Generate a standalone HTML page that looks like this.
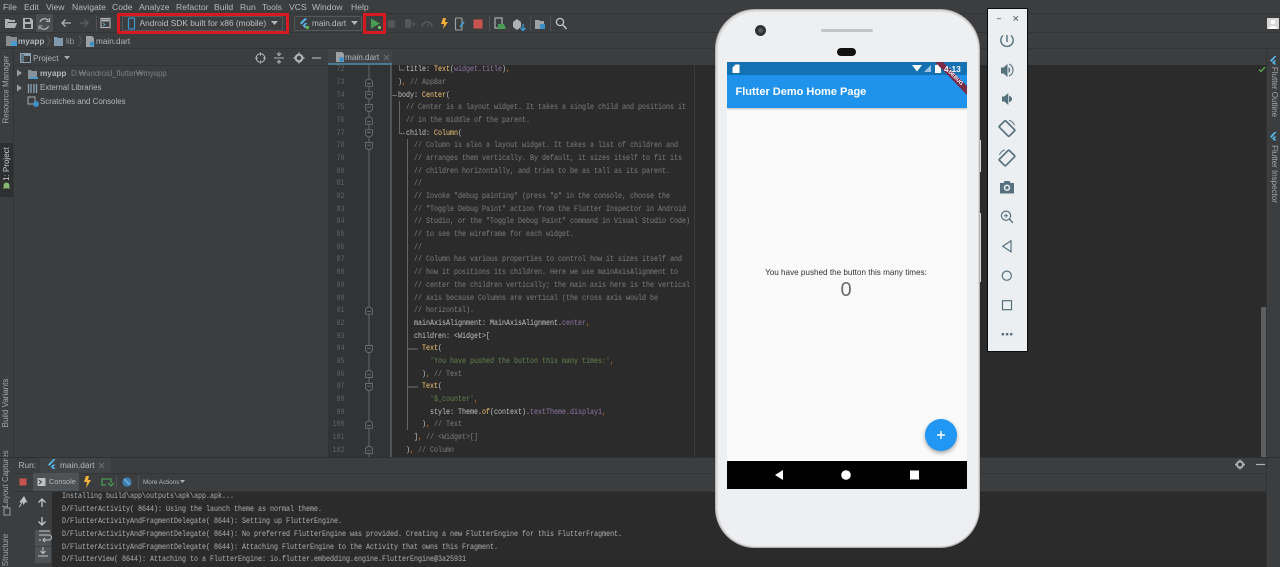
<!DOCTYPE html>
<html><head><meta charset="utf-8"><style>
*{box-sizing:border-box}
html,body{margin:0;padding:0;width:1280px;height:567px;overflow:hidden;background:#3b3d3f}
body{position:relative;font-family:"Liberation Sans","Noto Sans CJK KR",sans-serif;font-size:8.2px;color:#b4b7b9}
#w{position:absolute;left:0;top:0;width:1280px;height:567px;overflow:hidden;background:#3b3d3f;filter:blur(.3px)}
.a{position:absolute;white-space:nowrap}
.m{position:absolute;top:1.500px;line-height:11px;font-size:8.600px;color:#b6b8ba}
pre{margin:0;position:absolute;font-family:"Liberation Mono",monospace;font-size:8px;line-height:12.667px;transform:scaleX(.8333);transform-origin:0 0}
.c{color:#7e7e7e}.k{color:#c0c3c5}.y{color:#f5c679}.p{color:#8f75a6}.g{color:#64824f}.o{color:#c07a35}
.v{position:absolute;transform:rotate(-90deg);transform-origin:center;white-space:nowrap;font-size:8px;color:#a5a8aa;text-align:center;line-height:12px}
.v2{position:absolute;transform:rotate(90deg);transform-origin:center;white-space:nowrap;font-size:8px;color:#a5a8aa;text-align:center;line-height:12px}
svg{position:absolute;overflow:visible}
</style></head><body><div id="w">

<div class="a" style="left:0;top:13px;width:1280px;height:1px;background:#323435"></div>
<div class="a" style="left:0;top:32px;width:1280px;height:1px;background:#323435"></div>
<div class="a" style="left:0;top:48px;width:1280px;height:1px;background:#323435"></div>
<div class="a" style="left:13px;top:65px;width:315px;height:1px;background:#323435"></div>

<span class="m" style="left:3px">File</span><span class="m" style="left:24px">Edit</span><span class="m" style="left:46px">View</span><span class="m" style="left:72px">Navigate</span><span class="m" style="left:112px">Code</span><span class="m" style="left:139px">Analyze</span><span class="m" style="left:176px">Refactor</span><span class="m" style="left:214px">Build</span><span class="m" style="left:240px">Run</span><span class="m" style="left:262px">Tools</span><span class="m" style="left:289px">VCS</span><span class="m" style="left:312px">Window</span><span class="m" style="left:351px">Help</span>

<svg style="left:0;top:13px" width="120" height="20">
<path d="M5 6h4l1 1h5v2H8l-2 6H5z M8 10h9l-2 5H6z" fill="#afb1b3"/>
<path d="M23 5h8l2 2v9H23z" fill="#afb1b3"/><rect x="25" y="6" width="5" height="3" fill="#3b3d3f"/><rect x="25" y="11" width="6" height="4" fill="#3b3d3f"/>
<rect x="36" y="1" width="17" height="18" fill="#4b4e50"/>
<path d="M40 9a5 5 0 0 1 8.500-1.500M48.500 13a5 5 0 0 1-8.500 1.500" fill="none" stroke="#afb1b3" stroke-width="1.300"/><path d="M49.500 5v3.500H46M39 16.500V13h3.500" fill="none" stroke="#afb1b3" stroke-width="1.100"/>
<path d="M71 10H62M65.500 6.500 62 10l3.500 3.500" fill="none" stroke="#afb1b3" stroke-width="1.300"/>
<path d="M80 10h8M84.500 6.500 88 10l-3.500 3.500" fill="none" stroke="#5d6061" stroke-width="1.300"/>
<line x1="96.500" y1="3" x2="96.500" y2="18" stroke="#505355"/>
<rect x="101" y="5.500" width="9" height="9" fill="none" stroke="#afb1b3" stroke-width="1.200"/><rect x="102" y="6.500" width="7" height="2" fill="#afb1b3"/><path d="M103 10l2 1.500-2 1.500" fill="none" stroke="#5fa2c4"/>
</svg>

<div class="a" style="left:117px;top:13px;width:172px;height:21px;border:3px solid #d71a21"></div>
<div class="a" style="left:122px;top:16px;width:161px;height:15px;border:1px solid #55585a;border-radius:2px"></div>
<svg style="left:127px;top:17px" width="10" height="13"><rect x="1.500" y="1" width="6" height="11" rx="1" fill="none" stroke="#3f97cf" stroke-width="1.200"/></svg>
<div class="a" style="left:139.500px;top:18px;line-height:11px;font-size:8.400px;color:#bcbfc1">Android SDK built for x86 (mobile)</div>
<svg style="left:271px;top:21px" width="9" height="5"><path d="M0 0h7L3.500 4z" fill="#b4b7b9"/></svg>
<div class="a" style="left:294px;top:16px;width:68px;height:15px;border:1px solid #55585a;border-radius:2px"></div>
<svg style="left:299px;top:17px" width="12" height="13"><path d="M6 1 1 6l1.500 1.500L8 2zM6 6 3.500 8.500 6 11h2.500L6 8.500 8.500 6z" fill="#58b5e8"/><circle cx="8.500" cy="10.500" r="1.700" fill="#5fb04d"/></svg>
<div class="a" style="left:312px;top:18px;line-height:11px;font-size:8.200px;color:#bcbfc1">main.dart</div>
<svg style="left:351px;top:21px" width="9" height="5"><path d="M0 0h7L3.500 4z" fill="#b4b7b9"/></svg>
<div class="a" style="left:363px;top:13px;width:23px;height:21px;border:3px solid #d71a21"></div>
<svg style="left:370px;top:18px" width="12" height="12"><path d="M1 0.500 10 5.500 1 10.500z" fill="#499c54"/><circle cx="9.500" cy="9.500" r="1.500" fill="#7bd36b"/></svg>

<svg style="left:386px;top:13px" width="190" height="20">
<ellipse cx="5.500" cy="11" rx="3.500" ry="4" fill="#555759"/><path d="M1 8h9M1 11h9M1 14h9" stroke="#555759" stroke-width=".8"/>
<rect x="19" y="6" width="6" height="9" rx="2" fill="#555759"/><path d="M26 8l4 3-4 3z" fill="#4d4f51"/>
<path d="M36 14a5 5 0 1 1 10 0" fill="none" stroke="#555759" stroke-width="1.500"/><path d="M41 14l2-3" stroke="#555759"/>
<path d="M57 5h3l-1 4h3l-5 7 1-5h-3z" fill="#f2b13b"/>
<rect x="69.500" y="5" width="6.500" height="12" rx="1" fill="none" stroke="#9fa2a4" stroke-width="1.100"/><path d="M74 14l4-5" stroke="#45a3d5" stroke-width="1.600"/>
<rect x="87.500" y="6.500" width="9" height="9" fill="#c75450"/>
<line x1="103.500" y1="3" x2="103.500" y2="18" stroke="#505355"/>
<rect x="109" y="5" width="7" height="10" fill="none" stroke="#afb1b3" stroke-width="1.200"/><path d="M112 11h6l2 5h-8z" fill="#499c54"/>
<path d="M127 9l4-3 4 3v5l-4 3-4-3z" fill="#afb1b3"/><path d="M137 11v6M134.500 15l2.500 2.500 2.500-2.500" fill="none" stroke="#389fd6" stroke-width="1.300"/>
<line x1="144.500" y1="3" x2="144.500" y2="18" stroke="#505355"/>
<path d="M149 7h4l1 1h4v8h-9z" fill="#9fa2a4"/><rect x="154" y="11" width="5" height="5" fill="#3a8fc7"/>
<line x1="164.500" y1="3" x2="164.500" y2="18" stroke="#505355"/>
<circle cx="174" cy="9" r="3.600" fill="none" stroke="#c3c5c7" stroke-width="1.300"/><path d="M177 12l3.500 4" stroke="#c3c5c7" stroke-width="1.500"/>
</svg>
<div class="a" style="left:1267px;top:18px;width:12px;height:11px;background:#d8d8d8"></div>
<svg style="left:1267px;top:18px" width="12" height="11"><circle cx="6" cy="4" r="2.300" fill="#fff"/><path d="M2 11c0-4 8-4 8 0z" fill="#fff"/></svg>

<svg style="left:5px;top:35px" width="130" height="13">
<path d="M1 1h4l1 1h6v9H1z" fill="#8a8d90"/><rect x="6" y="6" width="6" height="5" fill="#4a9ad0"/>
<path d="M49 2h3l1 1h5v8h-9z" fill="#7f9aad"/>
<path d="M42 1l3 5-3 5M74 1l3 5-3 5" fill="none" stroke="#55585a"/>
<path d="M81 1h6l2 2v9h-8z" fill="#9ea1a3"/><circle cx="87" cy="9" r="2.500" fill="#3f8fc8"/>
</svg>
<div class="a" style="left:18px;top:35.500px;line-height:12px;font-size:8.200px;font-weight:bold;color:#b4b7b9">myapp</div>
<div class="a" style="left:66px;top:35.500px;line-height:12px;font-size:8.200px;color:#9a9d9f">lib</div>
<div class="a" style="left:96px;top:35.500px;line-height:12px;font-size:8.200px;color:#b4b7b9">main.dart</div>

<!-- left strip -->
<div class="a" style="left:0;top:143px;width:13px;height:54px;background:#2d2f31"></div>
<div class="v" style="left:-27px;top:84px;width:67px;height:12px">Resource Manager</div>
<div class="v" style="left:-18px;top:158px;width:50px;height:12px;color:#c9cbcd">1: Project</div>
<svg style="left:2px;top:181px" width="9" height="9"><circle cx="4.500" cy="4.500" r="3" fill="#8ab86e"/><path d="M2 8v-2M7 8v-2" stroke="#8ab86e"/></svg>
<div class="v" style="left:-24px;top:397px;width:60px;height:12px">Build Variants</div>
<div class="v" style="left:-27px;top:473px;width:66px;height:12px;font-size:7.800px">Layout Captures</div>
<svg style="left:3px;top:507px" width="8" height="9"><rect x="1" y="1" width="6" height="7" fill="none" stroke="#9a9d9f"/></svg>
<div class="v" style="left:-14px;top:544px;width:40px;height:12px">Structure</div>
<div class="a" style="left:13px;top:48px;width:1px;height:519px;background:#323435"></div>

<!-- project -->
<svg style="left:20px;top:53px" width="50" height="10"><rect x=".5" y=".5" width="10" height="9" fill="none" stroke="#8aa0b0"/><rect x="1" y="1" width="3" height="8" fill="#5d7485"/><rect x="4" y="1" width="6" height="2" fill="#8aa0b0"/><path d="M44 3h6l-3 3.500z" fill="#a9abad"/></svg>
<div class="a" style="left:33px;top:52.500px;line-height:12px;font-size:8.200px;color:#b0b3b5">Project</div>
<svg style="left:253px;top:51px" width="72" height="14">
<circle cx="7.500" cy="7" r="4.300" fill="none" stroke="#afb1b3" stroke-width="1.100"/><path d="M7.500 1.500v3M7.500 9.500v3M2 7h3M10 7h3" stroke="#afb1b3"/>
<path d="M21 7h10M26 1v3M24 2.500 26 4.500 28 2.500M26 13v-3M24 11.500l2-2 2 2" fill="none" stroke="#afb1b3"/>
<circle cx="46" cy="7" r="3.300" fill="none" stroke="#afb1b3" stroke-width="2.200"/><path d="M46 1.500v2M46 10.500v2M40.500 7h2M49.500 7h2" stroke="#afb1b3" stroke-width="1.500"/>
<path d="M59 7h9" stroke="#afb1b3" stroke-width="1.200"/>
</svg>
<svg style="left:16px;top:69px" width="24" height="40">
<path d="M1 0.500 6 4 1 7.500zM1 15.500 6 19 1 22.500z" fill="#9a9d9f"/>
<path d="M12 1h3l1 1h5v8h-9z" fill="#87939a"/><rect x="14" y="8" width="8" height="2" fill="#4a9ad0"/>
<path d="M12.500 15v9M15 15v9M18 15v9M20.500 15v9" stroke="#8aa5b5" stroke-width="1.300"/>
<rect x="12" y="28" width="7" height="7" fill="none" stroke="#a9abad"/><circle cx="20" cy="35" r="3" fill="#3f8fc8"/>
</svg>
<div class="a" style="left:40px;top:68px;line-height:12px;font-size:8.200px;font-weight:bold;color:#b4b7b9">myapp</div>
<div class="a" style="left:71px;top:68px;line-height:12px;font-size:7.800px;color:#7c7f81">D:₩android_flutter₩myapp</div>
<div class="a" style="left:40px;top:82px;line-height:12px;font-size:7.900px;color:#b4b7b9">External Libraries</div>
<div class="a" style="left:40px;top:96px;line-height:12px;font-size:7.900px;color:#b4b7b9">Scratches and Consoles</div>

<!-- editor -->
<div class="a" style="left:328px;top:49px;width:64px;height:16px;background:#414446"></div>
<div class="a" style="left:328px;top:63px;width:64px;height:2px;background:#4a7a94"></div>
<svg style="left:335px;top:52px" width="10" height="11"><path d="M1 0h6l2 2v8H1z" fill="#9ea1a3"/><circle cx="6.500" cy="7.500" r="2.500" fill="#3f8fc8"/></svg>
<div class="a" style="left:345px;top:52px;line-height:12px;font-size:8.200px;color:#b6b9bb">main.dart</div>
<svg style="left:383px;top:54px" width="7" height="7"><path d="M1 1l5 5M6 1 1 6" stroke="#6b6e70"/></svg>

<div class="a" style="left:328px;top:65px;width:939px;height:392px;background:#2b2b2b"></div>
<div class="a" style="left:328px;top:65px;width:63px;height:392px;background:#313335"></div>
<div class="a" style="left:694px;top:65px;width:1px;height:392px;background:#3a3a3a"></div>
<div class="a" style="left:1261px;top:307px;width:6px;height:150px;background:#5c5e5f"></div>
<svg style="left:1258px;top:66px" width="8" height="7"><path d="M1 3.500l2 2L7 1" fill="none" stroke="#5da353" stroke-width="1.400"/></svg>

<div class="a" style="left:328px;top:65px;width:939px;height:392px;overflow:hidden">
<pre style="left:4px;top:-.600px;width:15px;text-align:right;color:#5f6365">72
73
74
75
76
77
78
79
80
81
82
83
84
85
86
87
88
89
90
91
92
93
94
95
96
97
98
99
100
101
102</pre>
<pre style="left:70px;top:-.600px"><span class="k">  title: </span><span class="y">Text</span><span class="k">(</span><span class="p">widget.title</span><span class="k">)</span><span class="o">,</span>
<span class="k">)</span><span class="o">,</span> <span class="c">// AppBar</span>
<span class="k">body: </span><span class="y">Center</span><span class="k">(</span>
<span class="c">  // Center is a layout widget. It takes a single child and positions it</span>
<span class="c">  // in the middle of the parent.</span>
<span class="k">  child: </span><span class="y">Column</span><span class="k">(</span>
<span class="c">    // Column is also a layout widget. It takes a list of children and</span>
<span class="c">    // arranges them vertically. By default, it sizes itself to fit its</span>
<span class="c">    // children horizontally, and tries to be as tall as its parent.</span>
<span class="c">    //</span>
<span class="c">    // Invoke "debug painting" (press "p" in the console, choose the</span>
<span class="c">    // "Toggle Debug Paint" action from the Flutter Inspector in Android</span>
<span class="c">    // Studio, or the "Toggle Debug Paint" command in Visual Studio Code)</span>
<span class="c">    // to see the wireframe for each widget.</span>
<span class="c">    //</span>
<span class="c">    // Column has various properties to control how it sizes itself and</span>
<span class="c">    // how it positions its children. Here we use mainAxisAlignment to</span>
<span class="c">    // center the children vertically; the main axis here is the vertical</span>
<span class="c">    // axis because Columns are vertical (the cross axis would be</span>
<span class="c">    // horizontal).</span>
<span class="k">    mainAxisAlignment: MainAxisAlignment.</span><span class="p">center</span><span class="o">,</span>
<span class="k">    children: &lt;Widget&gt;[</span>
<span class="k">      </span><span class="y">Text</span><span class="k">(</span>
<span class="g">        'You have pushed the button this many times:'</span><span class="o">,</span>
<span class="k">      )</span><span class="o">,</span> <span class="c">// Text</span>
<span class="k">      </span><span class="y">Text</span><span class="k">(</span>
<span class="g">        '$_counter'</span><span class="o">,</span>
<span class="k">        style: Theme.</span><span class="y">of</span><span class="k">(context).</span><span class="p">textTheme.display1</span><span class="o">,</span>
<span class="k">      )</span><span class="o">,</span> <span class="c">// Text</span>
<span class="k">    ]</span><span class="o">,</span> <span class="c">// &lt;Widget&gt;[]</span>
<span class="k">  )</span><span class="o">,</span> <span class="c">// Column</span></pre>
<svg style="left:0;top:0" width="100" height="392">
<g fill="none" stroke="#6a6d6f" stroke-width=".9">
<path d="M41 0V392"/><path d="M63 0V392" stroke="#7b7e80"/>
<path d="M71.500 0V5H77M64 30.500h5M71.500 36V68.500H77M79.500 74V365M80 284h10M80 322h10"/>
</g>
<g fill="#313335" stroke="#696c6e" stroke-width=".9">
<path transform="translate(41,17.700)" d="M-3.500 3.500v-5l2-2h3l2 2v5zM-2 .8h4"/>
<path transform="translate(41,55.700)" d="M-3.500 3.500v-5l2-2h3l2 2v5zM-2 .8h4"/>
<path transform="translate(41,245.700)" d="M-3.500 3.500v-5l2-2h3l2 2v5zM-2 .8h4"/>
<path transform="translate(41,309)" d="M-3.500 3.500v-5l2-2h3l2 2v5zM-2 .8h4"/>
<path transform="translate(41,359.700)" d="M-3.500 3.500v-5l2-2h3l2 2v5zM-2 .8h4"/>
<path transform="translate(41,385)" d="M-3.500 3.500v-5l2-2h3l2 2v5zM-2 .8h4"/>
<path transform="translate(41,30.300)" d="M-3.500-3.500v5l2 2h3l2-2v-5zM-2-.8h4"/>
<path transform="translate(41,43)" d="M-3.500-3.500v5l2 2h3l2-2v-5zM-2-.8h4"/>
<path transform="translate(41,68.300)" d="M-3.500-3.500v5l2 2h3l2-2v-5zM-2-.8h4"/>
<path transform="translate(41,81)" d="M-3.500-3.500v5l2 2h3l2-2v-5zM-2-.8h4"/>
<path transform="translate(41,284)" d="M-3.500-3.500v5l2 2h3l2-2v-5zM-2-.8h4"/>
<path transform="translate(41,322)" d="M-3.500-3.500v5l2 2h3l2-2v-5zM-2-.8h4"/>
</g>
</svg>
</div>

<!-- run panel -->
<div class="a" style="left:0;top:457px;width:1280px;height:1px;background:#2e3031"></div>
<div class="a" style="left:13px;top:458px;width:1254px;height:109px;background:#3b3d3f"></div>
<div class="a" style="left:40px;top:458px;width:71px;height:15px;background:#414446"></div>
<div class="a" style="left:13px;top:473px;width:1254px;height:1px;background:#323435"></div>
<div class="a" style="left:13px;top:491px;width:1254px;height:1px;background:#323435"></div>
<div class="a" style="left:18.500px;top:459px;line-height:12px;font-size:8.300px;color:#b4b7b9">Run:</div>
<svg style="left:48px;top:459px" width="9" height="12"><path d="M5.500 0 0 5.500 1.500 7l6-7zM5 5.500 2.800 7.800 5 10h2.500L5.300 7.800 7.500 5.500z" fill="#58b5e8"/></svg>
<div class="a" style="left:60px;top:459px;line-height:12px;font-size:8.300px;color:#b6b9bb">main.dart</div>
<svg style="left:98px;top:462px" width="7" height="7"><path d="M1 1l5 5M6 1 1 6" stroke="#6b6e70"/></svg>
<svg style="left:1234px;top:458px" width="34" height="13">
<circle cx="6" cy="6.500" r="3" fill="none" stroke="#afb1b3" stroke-width="2"/><path d="M6 1.500v1.500M6 10v1.500M1 6.500h1.500M9.500 6.500H11" stroke="#afb1b3" stroke-width="1.400"/><path d="M22 6.500h9" stroke="#afb1b3" stroke-width="1.200"/>
</svg>
<div class="a" style="left:33px;top:473px;width:46px;height:18px;background:#4e5254"></div>
<svg style="left:18px;top:473px" width="175" height="18">
<rect x="1.500" y="5.500" width="7" height="7" fill="#c75450"/>
<rect x="19.500" y="5" width="8" height="8" fill="#bfc1c3"/><path d="M21 7l2.500 2L21 11" fill="none" stroke="#3b3d3f"/>
<path d="M68 3h3l-1 4h3l-5 8 1-6h-3z" fill="#f2b13b"/>
<path d="M88 12h-4V6h9v4" fill="none" stroke="#499c54" stroke-width="1.300"/><path d="M90 10l3 3 3-3" fill="none" stroke="#499c54" stroke-width="1.300"/>
<line x1="98.500" y1="3" x2="98.500" y2="16" stroke="#505355"/>
<circle cx="109" cy="9" r="4.600" fill="#3e7fb0"/><path d="M106 6l6 6" stroke="#6aaad8" stroke-width="1.800"/>
<line x1="120.500" y1="3" x2="120.500" y2="16" stroke="#505355"/>
<path d="M162 7h5l-2.500 3z" fill="#afb1b3"/>
</svg>
<div class="a" style="left:49px;top:476px;line-height:12px;font-size:7.300px;color:#b4b7b9">Console</div>
<div class="a" style="left:143px;top:476.500px;line-height:12px;font-size:6.300px;color:#b4b7b9">More Actions</div>

<div class="a" style="left:52px;top:492px;width:1215px;height:75px;background:#2b2b2b"></div>
<div class="a" style="left:35px;top:530px;width:16px;height:16px;background:#4e5254"></div>
<div class="a" style="left:35px;top:547px;width:16px;height:16px;background:#4e5254"></div>
<svg style="left:16px;top:493px" width="40" height="72">
<path d="M8 3l-4.500 6 1.500 1 1.500-1 1 3 2-3 2 .5z" fill="#bfc1c3"/><path d="M3 14l3-4" stroke="#bfc1c3"/>
<path d="M26 11V3M22.500 6.500 26 3l3.500 3.500M26 21v8M22.500 25.500 26 29l3.500-3.500" fill="none" stroke="#c3c5c7" stroke-width="1.300" transform="translate(0,3)"/>
<path d="M23 42h10a2.500 2.500 0 0 1 0 5h-6M23 38h11M23 47h2M29 45l-2 2 2 2" fill="none" stroke="#c3c5c7"/>
<path d="M27 54v6M24.500 58l2.500 2.500 2.500-2.500M22 63h10" fill="none" stroke="#c3c5c7"/>
</svg>
<div class="a" style="left:62px;top:491px;width:655px;height:76px;overflow:hidden">
<pre style="left:0;top:0;color:#b1b1b1">Installing build\app\outputs\apk\app.apk...
D/FlutterActivity( 8644): Using the launch theme as normal theme.
D/FlutterActivityAndFragmentDelegate( 8644): Setting up FlutterEngine.
D/FlutterActivityAndFragmentDelegate( 8644): No preferred FlutterEngine was provided. Creating a new FlutterEngine for this FlutterFragment.
D/FlutterActivityAndFragmentDelegate( 8644): Attaching FlutterEngine to the Activity that owns this Fragment.
D/FlutterView( 8644): Attaching to a FlutterEngine: io.flutter.embedding.engine.FlutterEngine@3a25931</pre>
</div>

<!-- right strip -->
<div class="a" style="left:1266px;top:48px;width:1px;height:519px;background:#323435"></div>
<svg style="left:1269px;top:56px" width="9" height="10"><path d="M5.500 0 1 4.500l1.500 1.500 5-6zM5 4.500 3 6.500l2 2h2.500l-2-2 2-2z" fill="#58b5e8"/></svg>
<div class="v2" style="left:1241px;top:86px;width:66px;height:12px">Flutter Outline</div>
<svg style="left:1269px;top:132px" width="9" height="10"><path d="M5.500 0 1 4.500l1.500 1.500 5-6zM5 4.500 3 6.500l2 2h2.500l-2-2 2-2z" fill="#58b5e8"/></svg>
<div class="v2" style="left:1236px;top:168px;width:76px;height:12px">Flutter Inspector</div>

<!-- phone -->
<div class="a" style="left:714.500px;top:50px;width:2px;height:8px;background:#555"></div>
<div class="a" style="left:979px;top:140px;width:2px;height:32px;background:#d5d3d4"></div>
<div class="a" style="left:979px;top:213px;width:2px;height:69px;background:#d5d3d4"></div>
<div class="a" style="left:715px;top:9px;width:265px;height:539px;border-radius:40px;background:#b6b1b3"></div>
<div class="a" style="left:716px;top:10px;width:263px;height:537px;border-radius:39px;background:#dcdadb"></div>
<div class="a" style="left:717.500px;top:11.500px;width:260px;height:534px;border-radius:37.500px;background:#eeeff1"></div>
<div class="a" style="left:755px;top:25px;width:11px;height:11px;border-radius:50%;background:#2f3133"></div>
<div class="a" style="left:758px;top:28px;width:5px;height:5px;border-radius:50%;background:#55585c"></div>
<div class="a" style="left:821px;top:29px;width:52px;height:2.500px;border-radius:2px;background:#c2c4c6"></div>
<div class="a" style="left:837px;top:48px;width:19px;height:8px;border-radius:4px;background:#111"></div>

<div class="a" style="left:727px;top:62px;width:240px;height:427px;background:#fafafa;overflow:hidden">
<div class="a" style="left:0;top:0;width:240px;height:13px;background:#1472b3"></div>
<div class="a" style="left:0;top:13px;width:240px;height:33px;background:#1f92ec;box-shadow:0 1px 2px rgba(0,0,0,.25)"></div>
<svg style="left:0;top:0" width="240" height="46">
<path d="M7.500 2.500h4v8.500h-7V5.500z" fill="#fff" transform="translate(1,0)"/>
<path d="M185 3h10l-5 6.500z" fill="#fff"/><path d="M204 3v7h-7z" fill="#9fc4e6"/>
<rect x="208" y="3" width="6" height="8" fill="#fff"/><rect x="210" y="2" width="2" height="1" fill="#fff"/>
<path d="M208 0h8l24 24v9z" fill="#7a2b48"/>
</svg>
<div class="a" style="left:212px;top:12.500px;width:32px;text-align:center;line-height:7px;font-size:5.200px;font-weight:bold;color:#fff;transform:rotate(45deg)">DEBUG</div>
<div class="a" style="left:217px;top:1.500px;line-height:11px;font-size:8.400px;font-weight:bold;color:#eef5fb">4:13</div>
<div class="a" style="left:8.500px;top:22.500px;line-height:15px;font-size:11px;font-weight:bold;color:#fff">Flutter Demo Home Page</div>
<div class="a" style="left:0;top:205px;width:238px;text-align:center;line-height:11px;font-size:8.150px;color:#333">You have pushed the button this many times:</div>
<div class="a" style="left:0;top:217px;width:238px;text-align:center;line-height:22px;font-size:20px;color:#6b6b6b">0</div>
<div class="a" style="left:198px;top:357px;width:32px;height:32px;border-radius:50%;background:#2196f3;box-shadow:0 2px 4px rgba(0,0,0,.35)"></div>
<svg style="left:198px;top:357px" width="32" height="32"><path d="M16 12v8M12 16h8" stroke="#fff" stroke-width="1.400"/></svg>
<div class="a" style="left:0;top:399px;width:240px;height:28px;background:#000"></div>
<svg style="left:0;top:399px" width="240" height="28"><path d="M48 14l8-5v10z" fill="#fff"/><circle cx="119" cy="14" r="4.800" fill="#fff"/><rect x="183" y="9.500" width="9" height="9" fill="#fff"/></svg>
</div>

<!-- emulator toolbar -->
<div class="a" style="left:987px;top:8px;width:41px;height:344px;background:#eceff1;border:1px solid #0d0d0d"></div>
<svg style="left:987px;top:8px" width="41" height="344">
<path d="M10 10.700h4" stroke="#6c7a82"/><path d="M26.500 8.200l4.500 4.500M31 8.200l-4.500 4.500" stroke="#56656d"/>
<g fill="none" stroke="#56707e" stroke-width="1.400">
<path d="M20 27v7"/><path d="M16 27.500a6.200 6.200 0 1 0 8 0"/>
</g>
<path d="M14 59.500h2.500l4-3.500v13l-4-3.500H14z" fill="#56707e"/><path d="M21.500 59a3.500 3.500 0 0 1 0 6z" fill="#56707e"/><path d="M22 56a6.500 6.500 0 0 1 0 12" fill="none" stroke="#56707e" stroke-width="1.100"/>
<path d="M15 88.500h2.300l4-3.500v12l-4-3.500H15z" fill="#56707e"/><path d="M22 88a3 3 0 0 1 0 6z" fill="#56707e"/>
<g fill="none" stroke="#56707e">
<rect x="-7" y="-4.500" width="14" height="9" rx="1" stroke-width="1.700" transform="translate(20,120.500) rotate(45)"/><path d="M22 112.300a8.500 8.500 0 0 1 5.500 5" stroke-width="1"/>
<rect x="-7" y="-4.500" width="14" height="9" rx="1" stroke-width="1.700" transform="translate(20,150) rotate(-45)"/><path d="M18 141.800a8.500 8.500 0 0 0-5.500 5" stroke-width="1"/>
</g>
<path d="M13 175h3.500l1-2h5l1 2H27v10.500H13z" fill="#56707e"/><circle cx="20" cy="179.700" r="3.200" fill="#eceff1"/><circle cx="20" cy="179.700" r="1.700" fill="#56707e"/>
<g fill="none" stroke="#56707e" stroke-width="1.200">
<circle cx="19" cy="207.700" r="4.600"/><path d="M22.300 211l3.600 3.800" stroke-width="1.400"/><path d="M17 207.700h4M19 205.700v4" stroke-width="1"/>
<path d="M24 232.700v11l-8.300-5.500z"/>
<circle cx="19.800" cy="267.700" r="4.600"/>
<rect x="15.500" y="292.700" width="9" height="9"/>
</g>
<g fill="#56707e"><rect x="14.700" y="325" width="2.400" height="2.400"/><rect x="18.900" y="325" width="2.400" height="2.400"/><rect x="23" y="325" width="2.400" height="2.400"/></g>
</svg>
</div></body></html>
